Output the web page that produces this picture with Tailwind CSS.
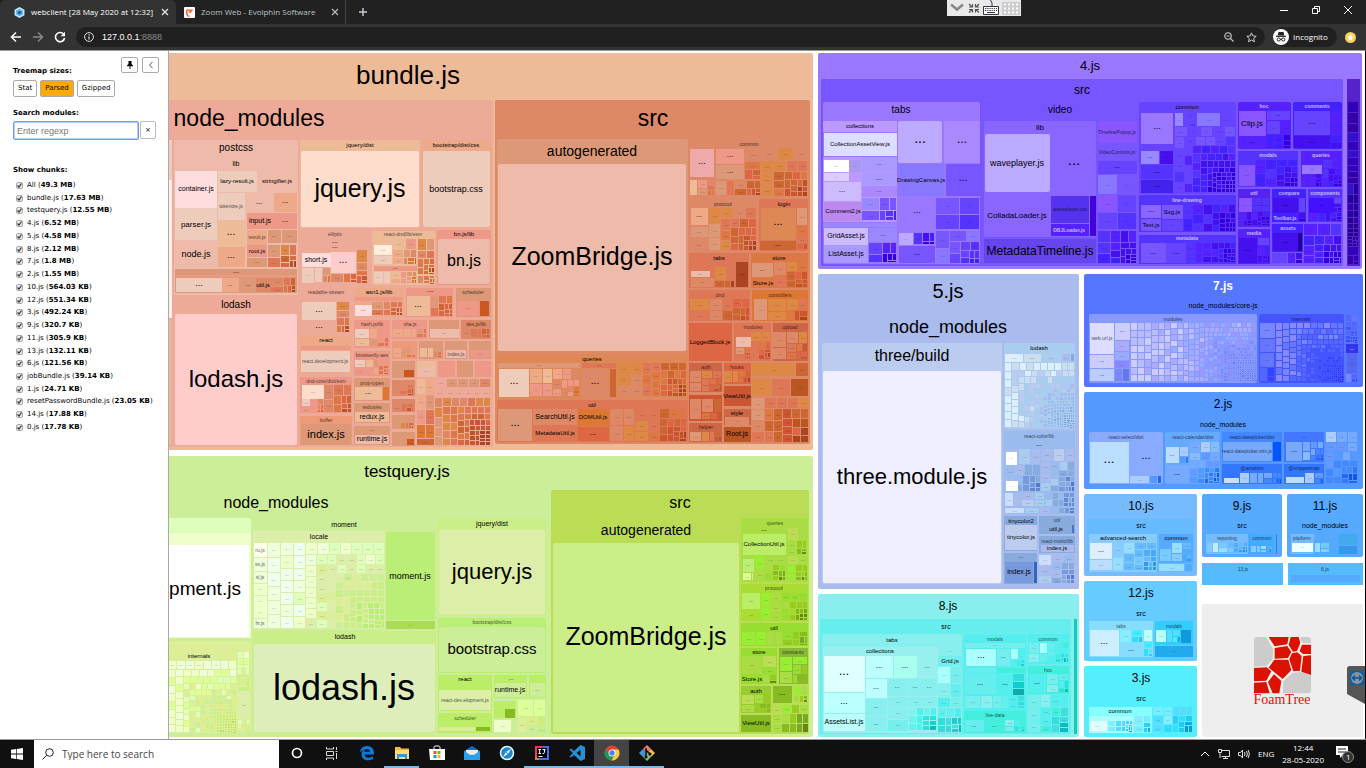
<!DOCTYPE html>
<html lang="en">
<head>
<meta charset="utf-8">
<title>webclient [28 May 2020 at 12:32]</title>
<script src="https://cdn.jsdelivr.net/npm/@tailwindcss/browser@4"></script>
</head>
<body class="flex h-screen flex-col overflow-hidden bg-white font-['Open_Sans','Noto_Sans',sans-serif] text-[8px] leading-3 text-white">
<header class="relative shrink-0 bg-[#333333]">
  <nav class="flex h-6 items-center bg-[#212121]">
    <div class="flex h-6 w-44 items-center rounded-t-md bg-[#333333] pl-3.5">
      <svg class="mr-1.5 size-[11px] shrink-0" viewBox="0 0 12 12"><path d="M6 0l5.4 3v6L6 12 .6 9V3z" fill="#c8e6f5"/><path d="M6 1.8l3.7 2.1v4.2L6 10.200 2.300 8.100V3.900z" fill="#5cb7e6"/><path d="M6 4l2 1v2.200L6 8.300 4 7.200V5z" fill="#1f64b5"/></svg>
      <a href="#" class="w-[126px] whitespace-nowrap">webclient [28 May 2020 at 12:32]</a>
      <button aria-label="Close tab" class="ml-1"><svg class="size-2" viewBox="0 0 8 8" stroke="#e8e8e8" stroke-width="1.200"><path d="M1 1l6 6M7 1L1 7"/></svg></button>
    </div>
    <div class="flex h-6 w-[170px] items-center border-r border-[#44444a] pl-2">
      <svg class="mr-1.5 size-[11px] shrink-0" viewBox="0 0 12 12"><rect width="12" height="12" rx="1" fill="#fff"/><path d="M3 8V3.500h6.500M6 6.500q0-1.500 2.500-1.500M3 6q0 3.500 3 4.500" fill="none" stroke="#ef6c33" stroke-width="1.600"/></svg>
      <a href="#" class="w-[130px] whitespace-nowrap text-[#b9c3c3]">Zoom Web - Evolphin Software</a>
      <button aria-label="Close tab"><svg class="size-2" viewBox="0 0 8 8" stroke="#bbb" stroke-width="1.200"><path d="M1 1l6 6M7 1L1 7"/></svg></button>
    </div>
    <button aria-label="New tab" class="ml-3"><svg class="size-2.5" viewBox="0 0 10 10" stroke="#ccd" stroke-width="1.400"><path d="M5 1v8M1 5h8"/></svg></button>
    <div class="ml-auto flex items-center gap-6 pr-3.5 pb-1">
      <button aria-label="Minimize"><svg class="size-2" viewBox="0 0 8 8" stroke="#fff"><path d="M0 4.500h8"/></svg></button>
      <button aria-label="Restore"><svg class="size-2" viewBox="0 0 8 8" stroke="#fff" fill="none"><path d="M.5 2.500h5v5h-5zM2.500 2V.5h5v5H6"/></svg></button>
      <button aria-label="Close window"><svg class="size-2" viewBox="0 0 8 8" stroke="#fff"><path d="M0 0l8 8M8 0L0 8"/></svg></button>
    </div>
  </nav>
  <div class="flex h-[26px] items-center px-2.5">
    <button aria-label="Back"><svg class="size-3" viewBox="0 0 12 12" fill="none" stroke="#fff" stroke-width="1.500"><path d="M11 6H1.500M6 1.500L1.500 6 6 10.500"/></svg></button>
    <button aria-label="Forward" class="ml-2.5"><svg class="size-3" viewBox="0 0 12 12" fill="none" stroke="#888" stroke-width="1.500"><path d="M1 6h9.500M6 1.500L10.500 6 6 10.500"/></svg></button>
    <button aria-label="Reload" class="mx-2.5"><svg class="size-3" viewBox="0 0 12 12"><path d="M10 3.700A4.600 4.600 0 1 0 10.600 7" fill="none" stroke="#fff" stroke-width="1.600"/><path d="M11 .8v4.400H6.600z" fill="#fff"/></svg></button>
    <div class="flex h-5 flex-1 items-center rounded-full bg-[#202020] px-2">
      <svg class="mr-2 size-2.5 shrink-0" viewBox="0 0 10 10"><circle cx="5" cy="5" r="4.400" fill="none" stroke="#ddd"/><path d="M5 4.500v3M5 2.300v1.200" stroke="#ddd" stroke-width="1.200"/></svg>
      <span class="flex-1 font-['Liberation_Sans',sans-serif] text-[9px]">127.0.0.1<span class="text-[#8c8c8c]">:8888</span></span>
      <button aria-label="Zoom"><svg class="size-2.5" viewBox="0 0 10 10" fill="none" stroke="#ccc" stroke-width="1.100"><circle cx="4" cy="4" r="3.200"/><path d="M6.300 6.300L9.500 9.500M2.500 4h3"/></svg></button>
      <button aria-label="Bookmark" class="ml-3"><svg class="size-[11px]" viewBox="0 0 12 12" fill="none" stroke="#ddd"><path d="M6 1l1.500 3.300 3.600.4-2.700 2.400.8 3.500L6 8.800l-3.200 1.800.8-3.500L.9 4.700l3.600-.4z"/></svg></button>
    </div>
    <div class="ml-2 flex h-5 w-16 items-center rounded-full bg-[#202020]">
      <svg class="mr-1 size-4 shrink-0" viewBox="0 0 16 16"><circle cx="8" cy="8" r="8" fill="#fff"/><path d="M5.500 3h5l.8 3.500H4.700z" fill="#222"/><path d="M3 7.300h10" stroke="#222" stroke-width="1.200"/><circle cx="5.700" cy="10.500" r="1.600" fill="none" stroke="#222"/><circle cx="10.300" cy="10.500" r="1.600" fill="none" stroke="#222"/><path d="M7 10.300h2" stroke="#222"/></svg>
      <span>Incognito</span>
    </div>
    <svg class="ml-2 size-[11px]" viewBox="0 0 12 12"><circle cx="6" cy="6" r="6" fill="#fbd05a"/><path d="M6 2.500L9.500 6H8v3H4V6H2.500z" fill="#fff"/></svg>
  </div>
  <svg class="absolute top-0 left-[947px] h-4 w-[74px]" viewBox="0 0 74 16"><path d="M0 0h74v16H0z" fill="#e9e9e9"/><path d="M4 4.500l6 5 6-5" fill="none" stroke="#888" stroke-width="2.500"/><g fill="none" stroke="#555" stroke-width="1.200"><path d="M22 4l3 3M25.500 4v3H22M32 4l-3 3M28.500 4v3H32M22 12.500l3-3M25.500 12.500v-3H22M32 12.500l-3-3M28.500 12.500v-3H32"/></g><path d="M36.500 6.500h15v8h-15z" fill="#fff" stroke="#334"/><path d="M38 8.500h12M38 10.500h12" stroke="#334" stroke-dasharray="1.200 1"/><path d="M40 12.500h8M43.500 0l1.500 3v3" fill="none" stroke="#334"/><path d="M55 2h18v13H55z" fill="#ccc"/><path d="M57 4.500h15M57 8.500h15M57 12.500h15" stroke="#fff" stroke-width="2" stroke-dasharray="2 2"/></svg>
</header>

<div class="flex min-h-0 flex-1 border-t border-r border-t-[#999] border-r-black">
  <aside class="w-[169px] shrink-0 border-r border-[#aaa] pl-[13px] font-['DejaVu_Sans',sans-serif] text-[7px] leading-[9px] text-black">
    <div class="flex gap-1 pt-[6px] pl-[108px]">
      <button aria-label="Pin" class="grid h-4 w-[17px] place-items-center rounded-[2px] border border-[#aaa]"><svg class="h-2 w-2" viewBox="0 0 8 8"><path d="M2.500 0h3v3l1.500 1.500v.7H1v-.7L2.500 3z"/><path d="M4 5v3" stroke="#000" stroke-width=".9"/></svg></button>
      <button aria-label="Hide sidebar" class="grid h-4 w-[17px] place-items-center rounded-[2px] border border-[#aaa]"><svg class="h-2 w-2" viewBox="0 0 8 8" fill="none" stroke="#555"><path d="M5.500.8L2.500 4l3 3.200"/></svg></button>
    </div>
    <h2 class="-mt-1.5 font-bold">Treemap sizes:</h2>
    <div class="mt-1 flex gap-[3px]">
      <button class="h-[17px] rounded-[2px] border border-[#aaa] px-1">Stat</button>
      <button class="h-[17px] rounded-[2px] border border-[#aaa] bg-[#ffaa00] px-1">Parsed</button>
      <button class="h-[17px] rounded-[2px] border border-[#aaa] px-1">Gzipped</button>
    </div>
    <label for="q" class="mt-3 block font-bold">Search modules:</label>
    <div class="mt-[3px] flex gap-px">
      <input id="q" placeholder="Enter regexp" class="h-[19px] w-[126px] rounded-[2px] border border-[#6b9cf0] px-[3px] font-['Liberation_Sans',sans-serif] text-[9px] ring-1 ring-[#b7cdf7] outline-none ring-inset placeholder:text-[#777]">
      <button aria-label="Clear" class="h-[18px] w-4 rounded-[2px] border border-[#bbb]">×</button>
    </div>
    <h2 class="mt-[26px] font-bold">Show chunks:</h2>
    <div id="chunks" class="mt-1.5 flex h-[251px] flex-col justify-between"></div>
  </aside>
  <main class="relative min-w-0 flex-1">
    <svg id="map" class="block h-full w-full font-['Liberation_Sans',Arial,sans-serif]" viewBox="169 51 1196 688" preserveAspectRatio="xMinYMin slice"></svg>
    <svg class="absolute top-[615px] right-0 h-[39px] w-[18px]" viewBox="0 0 18 39"><path d="M3 0h15v38L0 28V3q0-3 3-3z" fill="#555"/><path d="M3 5h14v14H3z" fill="#0b5fa5"/><circle cx="10" cy="12" r="6" fill="#8795a0"/><path d="M6 12h8M8 9.500L5.500 12 8 14.500M12 9.500l2.500 2.500-2.500 2.500" fill="none" stroke="#07518f" stroke-width="1.300"/></svg>
  </main>
</div>

<footer class="flex h-[29px] shrink-0 items-stretch border-t border-[#999] bg-[#101010]">
  <button aria-label="Start" class="grid w-[34px] place-items-center"><svg class="size-3" viewBox="0 0 12 12" fill="#fff"><path d="M0 1.700l5-.7v4.600H0zM5.700.9L12 0v5.600H5.700zM0 6.400h5V11l-5-.7zM5.700 6.400H12V12l-6.300-.9z"/></svg></button>
  <label class="flex w-[245px] items-center gap-2 bg-white px-2">
    <svg class="size-3" viewBox="0 0 12 12" fill="none" stroke="#222"><circle cx="7.500" cy="4.500" r="3.800"/><path d="M4.800 7.200L.5 11.500"/></svg>
    <input aria-label="Search" placeholder="Type here to search" class="min-w-0 flex-1 text-[10px] text-black outline-none placeholder:text-[#444]">
  </label>
  <div class="flex [&>button]:grid [&>button]:w-[35px] [&>button]:place-items-center [&>button]:border-b-2 [&_svg]:size-4">
    <button aria-label="Cortana" class="border-transparent"><svg viewBox="0 0 16 16"><circle cx="8" cy="8" r="4.500" fill="none" stroke="#fff" stroke-width="1.700"/></svg></button>
    <button aria-label="Task view" class="border-transparent"><svg viewBox="0 0 16 16" fill="none" stroke="#ddd"><path d="M2.500 2v2h7V2M2.500 6.500h7v4h-7zM2.500 15v-2h7v2M12.500 2v3M12.500 8v6M11.500 6.500h2"/></svg></button>
    <button aria-label="Edge" class="border-transparent"><svg viewBox="0 0 16 16"><path d="M1 7.500C1.500 3 4.500 1 8.200 1 12.500 1 15 4 15 8v1.500H5.500c.3 3.500 5 4 8.500 2V14c-5 2.800-11.500 1-11.500-4.500C2.500 7 4 5 6.500 4.200 5.500 5.200 5.400 6 5.400 6.800H11c0-4-6-4-10 .7z" fill="#0a7bdc"/></svg></button>
    <button aria-label="Explorer" class="border-[#76b9ed]"><svg viewBox="0 0 16 16"><path d="M1 2h5l1.500 1.500H15V14H1z" fill="#f5b83d"/><path d="M1 5h14v9H1z" fill="#fddb7a"/><path d="M3 9h10v5h-2v-2H5v2H3z" fill="#3a94d6"/></svg></button>
    <button aria-label="Store" class="border-transparent"><svg viewBox="0 0 16 16"><path d="M5 5V2.500Q5 1 6.500 1h3Q11 1 11 2.500V5" fill="none" stroke="#fff"/><path d="M0 4h16v11H1z" fill="#fff"/><path d="M4.500 6h3v3h-3z" fill="#f25022"/><path d="M8.500 6h3v3h-3z" fill="#7fba00"/><path d="M4.500 10h3v3h-3z" fill="#00a4ef"/><path d="M8.500 10h3v3h-3z" fill="#ffb900"/></svg></button>
    <button aria-label="Mail" class="border-transparent"><svg viewBox="0 0 16 16"><path d="M0 6l8-5 8 5v9H0z" fill="#0b6fc2"/><path d="M2 5h12v5H2z" fill="#eee"/><path d="M0 6l8 5 8-5v9H0z" fill="#28a0ea"/></svg></button>
    <button aria-label="Browser" class="border-transparent"><svg viewBox="0 0 16 16"><circle cx="8" cy="8" r="6.500" fill="#1d86cf" stroke="#dff" stroke-width="1.500"/><path d="M12 4L7 7l-3 5 5-3z" fill="#fff"/><path d="M7 7l2 2" stroke="#1d86cf"/></svg></button>
    <button aria-label="IntelliJ" class="border-[#76b9ed]"><svg viewBox="0 0 16 16"><path d="M1 1h8L1 15z" fill="#fe315d"/><path d="M9 1h6v14H1z" fill="#3f6ef0"/><path d="M1 10l5 5H1z" fill="#f0703d"/><path d="M3 3h10v10H3z" fill="#000"/><path d="M4.500 4.500h2.500M5.700 4.500v4M4.500 8.500h2.500M8.500 4.500h3M10.500 4.500v3q0 1-2 1M4.500 11.500h4" stroke="#fff" fill="none"/></svg></button>
    <button aria-label="VS Code" class="border-[#76b9ed]"><svg viewBox="0 0 16 16"><path d="M11.500 0L16 2v12l-4.500 2-6.500-6-3 2.500L.5 11.500 4 8 .5 4.500 2 3.500 5 6zM11.500 4.700L7.500 8l4 3.300z" fill="#2390d8" fill-rule="evenodd"/></svg></button>
    <button aria-label="Chrome" class="border-[#76b9ed] bg-[#444]"><svg viewBox="0 0 16 16"><circle cx="8" cy="8" r="7.500" fill="#db4437"/><path d="M1.500 4.200A7.500 7.500 0 0 0 7.500 15.500L11 9.500 5 9.700z" fill="#0f9d58"/><path d="M8 4.500h6.600A7.500 7.500 0 0 1 7.500 15.500L11 9.500z" fill="#ffcd40"/><circle cx="8" cy="8" r="3.500" fill="#fff"/><circle cx="8" cy="8" r="2.700" fill="#4285f4"/></svg></button>
    <button aria-label="Git" class="border-[#76b9ed]"><svg viewBox="0 0 16 16"><path d="M8 0l4 4-4 4-4-4z" fill="#f27d72"/><path d="M4 4l4 4-4 4-4-4z" fill="#4c8ee0"/><path d="M12 4l4 4-4 4-4-4z" fill="#f0c24c"/><path d="M8 8l4 4-4 4-4-4z" fill="#7ec36a"/><path d="M7 3v10M7 5l4 4" stroke="#111" stroke-width="1.500"/><circle cx="7" cy="12" r="1.500"/><circle cx="11" cy="9" r="1.500"/></svg></button>
  </div>
  <div class="ml-auto flex items-center gap-2 pr-3">
    <svg class="h-2 w-2.5" viewBox="0 0 10 8" fill="none" stroke="#fff"><path d="M1 6l4-4 4 4"/></svg>
    <svg class="size-3" viewBox="0 0 12 12" fill="none" stroke="#ddd"><path d="M3.500 2.500h8v6h-8M7.500 8.500v2M5 10.500h5M.5 1.500h3v3h-3zM2 4.500v5.500"/></svg>
    <svg class="h-3 w-3" viewBox="0 0 12 12" fill="none" stroke="#ddd"><path d="M.5 4.500h2l2-2.500v8l-2-2.500h-2zM6.500 4q1 2 0 4M8.500 3q1.800 3 0 6M10.200 2q2.300 4 0 8"/></svg>
    <span>ENG</span>
    <div class="text-center">12:44<br>28-05-2020</div>
    <svg class="ml-1 h-5 w-[18px]" viewBox="0 0 18 20"><path d="M0 2h12v9H7l-3 3v-3H0z" fill="#fff"/><path d="M2 5h8M2 8h8" stroke="#222"/><circle cx="12" cy="13" r="5.500" fill="#333" stroke="#888"/><text x="10" y="16" font-size="8" fill="#fff">1</text></svg>
  </div>
</footer>

<script>
const chunks = [['All','49.3 MB'],['bundle.js','17.63 MB'],['testquery.js','12.55 MB'],['4.js','6.52 MB'],['5.js','4.58 MB'],['8.js','2.12 MB'],['7.js','1.8 MB'],['2.js','1.55 MB'],['10.js','564.03 KB'],['12.js','551.34 KB'],['3.js','492.24 KB'],['9.js','320.7 KB'],['11.js','305.9 KB'],['13.js','132.11 KB'],['6.js','121.56 KB'],['jobBundle.js','39.14 KB'],['1.js','24.71 KB'],['resetPasswordBundle.js','23.05 KB'],['14.js','17.88 KB'],['0.js','17.78 KB']];
document.getElementById('chunks').innerHTML = chunks.map(([n, s]) =>
  `<label class="flex items-center gap-1 pl-[3px] whitespace-nowrap"><span class="grid"><input type="checkbox" checked class="col-start-1 row-start-1 m-0 size-[7px] appearance-none rounded-[2px] border border-[#aaa] bg-[#e8e8e8]"><svg class="pointer-events-none col-start-1 row-start-1 size-[7px]" viewBox="0 0 7 7" fill="none" stroke="#333" stroke-width="1.200"><path d="M1.500 3.500l1.500 1.500 2.500-3.500"/></svg></span><span>${n} (<b>${s}</b>)</span></label>`).join('');

/* Treemap rows: "x1 y1 x2 y2 colour [size label]" is a box,
   "t|w cx cy size label" is dark|white text,
   "f x1 y1 x2 y2 palette count [falloff]" is a squarified block of small modules. */
const palettes = {
  o: 'fdc ecb eb9 ea8 e98 d97 d86 e98 d75 d73 c63'.split(' '),
  r: 'ea9 d97 d86 d84 d75 d74 c63 d64 c53 b52 a42'.split(' '),
  g: 'efd efc df9 dfb de9 ce9 de8 ce8 ce7 be7 bd5'.split(' '),
  l: 'efe efd efc dfb dea de9 ce9 ce8 ce8 be7 be7'.split(' '),
  G: 'ce7 bd5 ad4 9e3 ad4 9d3 9c2 8b2 8b2 7a2 681'.split(' '),
  v: 'a8f 98f 87f 75f 85f 64f 64f 53f 53f 42e'.split(' '),
  V: '75f 64f 53f 52f 42f 41e 41e 30d 30d 30c'.split(' '),
  D: '42d 31c 30b 30a 209 208'.split(' '),
  b: 'eef cdf bce abe ace 9be 8ad 8ad 79d 68c 57c'.split(' '),
  m: 'def cde bce ace ace abe 9be 9be 8ad 8ad 79d'.split(' '),
  c: 'cff aff 8ee 7ee 6ee 5ee 4ed 3dd 4dd 2cc 1bb'.split(' '),
  u: 'ccf bbf aaf 9af 99f 89f 88f 78f 78f 67f 67e'.split(' '),
  U: '88f 78f 67f 56f 56f 45f 45f 34f 34f 33e 22d'.split(' '),
  k: 'def acf 8bf 7af 69f 59f 48f 48f 37f 26f 15e'.split(' '),
  s: 'dff bef 9df 8cf 7cf 6bf 5af 5bf 4af 39e 28d'.split(' '),
  t: 'dff bff 8ef 7ef 5df 4ef 3df 3cf 2ce 1ae 19c'.split(' ')
};
const out = [];
const box = (a, b, c, d, col) => out.push(`<rect x="${a}" y="${b}" width="${Math.max(1, c - a)}" height="${Math.max(1, d - b)}" rx="${Math.min(c - a, d - b) > 40 ? 2 : 0}" fill="#${col}"/>`);
const label = (x, y, s, str, white) => {
  const faint = s < 6 ? ' opacity=".65"' : '';
  const drop = str[0] === '.' ? 1 : Math.round(s * .33);
  out.push(`<text x="${x}" y="${y + drop}" font-size="${s}" text-anchor="middle"${faint}${white ? ' fill="#fff" font-weight="bold"' : ''}>${str}</text>`);
};
let seed = 7;
const rnd = () => (seed = (seed * 16807) % 2147483647) / 2147483647;
function fill(x1, y1, x2, y2, pal, n, k) {
  const p = palettes[pal], w = [], start = n < 40 ? 2 : 0;
  for (let i = 0; i < n; i++) w.push(Math.exp(-k * i / n));
  let x = x1, y = y1, W = x2 - x1, H = y2 - y1, sum = w.reduce((a, b) => a + b, 0), i = 0;
  while (i < n && W > 1 && H > 1) {
    const side = Math.min(W, H), area = W * H / sum;
    let j = i, s = 0, best = 1e9;
    while (j < n) {
      const s2 = s + w[j], t = s2 * area / side, first = w[i] * area / t, last = w[j] * area / t;
      const worst = Math.max(first / t, t / first, t / last, last / t);
      if (worst > best) break;
      best = worst; s = s2; j++;
    }
    const t = s * area / side; let q = 0;
    for (let m = i; m < j; m++) {
      const len = w[m] * area / t;
      const r = W < H ? [x + q, y, x + q + len, y + t] : [x, y + q, x + t, y + q + len];
      const [a, b, c, d] = r.map(Math.round);
      const pos = start + m / n * (p.length - 1 - start) + (rnd() - .5) * 3;
      box(a, b, c - 1, d - 1, p[Math.max(0, Math.min(p.length - 1, Math.round(pos)))]);
      if (c - a > 8 && d - b > 5) label((a + c) >> 1, (b + d) >> 1, 4, '....');
      q += len;
    }
    if (W < H) { y += t; H -= t; } else { x += t; W -= t; }
    sum -= s; i = j;
  }
}
function panel(ox, oy, unit, rows, unitY = unit) {
  const X = v => Math.round(ox + v / unit), Y = v => Math.round(oy + v / unitY);
  rows.trim().split('\n').forEach(line => {
    const p = line.trim().split(' ');
    if (p[0] === 't' || p[0] === 'w') label(X(+p[1]), Y(+p[2]), +p[3], p.slice(4).join(' '), p[0] === 'w');
    else if (p[0] === 'f') fill(X(+p[1]), Y(+p[2]), X(+p[3]), Y(+p[4]), p[5], +p[6], +(p[7] || 2.5));
    else {
      const [a, b, c, d] = [X(+p[0]), Y(+p[1]), X(+p[2]), Y(+p[3])];
      box(a, b, c, d, p[4]);
      if (p[5]) label((a + c) >> 1, (b + d) >> 1, +p[5], p.slice(6).join(' '));
    }
  });
}
/* chunk backgrounds */
panel(0, 0, 1, `
160 53 813 450 eb9
160 100 493 447 ea9
495 100 810 444 d86
t 408 75 26 bundle.js
t 249 118 23 node_modules
t 653 118 23 src
160 140 172 180 ecb
160 180 172 318 fee
160 320 171 444 eb9
160 456 813 737 ce9
t 407 471 17 testquery.js
t 276 503 16 node_modules
551 490 809 734 bd5
t 680 503 16 src
`);
/* bundle.js / node_modules */
panel(168, 130, 3, `
18 30 391 494 eba
t 204 54 10 postcss
t 204 102 7 lib
21 123 147 233 fdd 7 container.js
149 123 267 185 ecb 6 lazy-result.js
t 328 154 6 stringifier.js
149 189 231 269 ecb 5 tokenize.js
t 274 218 8 ...
318 189 386 247 ea8 8 ...
21 235 148 330 ecb 8 parser.js
t 84 372 9 node.js
149 272 232 350 eb9 10 ...
149 352 232 411 ea8 9 ...
236 249 314 297 e98 7 input.js
316 249 386 297 e98 8 ...
236 300 297 344 ea8 5 result.js
299 300 340 340 d97 5 ...
342 300 386 340 d97 5 ...
236 346 297 380 e98 6 root.js
236 383 297 411 d97 5 ...
f 299 344 388 413 r 9
21 418 386 490 d97
t 203 425 7 ...
21 434 386 441 e98
23 443 162 486 ecb 9 ...
163 443 213 486 ea8 6 ...
215 443 263 486 d97 6 ...
264 443 308 486 d86 6 util.js
f 310 443 385 488 r 8
t 203 525 10 lodash
21 552 387 945 fcc 24 lodash.js
397 30 757 294 eb9
t 575 44 6 jquery/dist
399 63 753 291 fdc 25 jquery.js
762 30 968 294 ea8
t 865 44 6 bootstrap/dist/css
765 63 965 291 ecb 9 bootstrap.css
t 500 312 5 elliptic
t 500 335 7 ...
t 500 350 7 ...
402 369 488 411 fdd 7 short.js
490 366 565 429 fcc 10 ...
402 413 439 459 ecb 4 ...
f 441 413 490 460 o 4
f 567 360 600 462 r 6
f 490 433 566 460 r 4
613 303 802 465 eb9
t 706 312 5 react-dnd/lib/esm
617 345 673 375 fed 5 ...
617 377 673 403 ecb 5 ...
f 675 328 748 405 o 10
f 750 328 800 435 r 14
617 408 747 423 e98 6 ...
617 426 645 460 ecb 4 ...
f 647 426 748 461 o 12
f 751 438 800 461 r 7
807 300 968 465 e98
t 887 312 6 bn.js/lib
809 327 966 462 eba 16 bn.js
t 473 485 5 readable-stream
402 515 504 569 ecb 9 ...
t 454 590 9 ...
f 507 515 545 608 r 8
560 473 707 562 ea8
t 632 485 6 asn1.js/lib
562 500 704 512 e98
562 524 611 558 fdd 6 ...
f 613 515 705 559 r 12
714 473 856 562 e98
t 785 484 8 ...
717 498 786 559 eb9 9 ...
f 788 498 855 560 r 12
864 473 968 562 d97
t 915 485 5 scheduler
866 514 934 559 e98 5 ...
936 514 963 559 c52
397 618 552 728 ea8
t 474 630 6 react
399 648 548 660 e98
399 663 547 727 ecb 5 react.development.js
397 740 552 850 e98
t 474 752 5 dnd-core/dist/esm
401 766 467 806 fdc 5 ...
f 469 766 551 848 r 12
f 401 808 468 848 o 10
397 858 552 945 e97
t 474 869 5 buffer
399 883 549 944 d97 11 index.js
558 570 667 654 e98
t 612 583 5 hash.js/lib
f 562 598 664 652 o 10
558 663 667 738 e98
t 612 675 5 browserify-aes
f 562 690 664 736 o 14
558 744 667 812 d97
t 612 758 5 prop-types
562 771 643 809 eb9 8 ...
645 771 664 809 d73
558 819 667 880 d97
t 612 831 5 redux/es
562 846 662 876 eb9 7 redux.js
558 888 667 945 d97
t 612 899 5 ...
562 914 662 943 eba 7 runtime.js
673 570 778 626 e98
t 725 583 5 sha.js
f 675 597 776 624 o 7
783 570 874 626 d97
785 597 873 623 eba 5 ...
880 570 968 626 d86
t 925 583 5 des.js/lib
f 882 597 967 624 r 7
673 632 746 686 e97
f 675 655 745 684 o 6
753 632 824 686 d97
f 755 655 823 684 o 6
831 632 896 686 d97
833 660 895 683 eba 5 index.js
903 632 968 686 d97
905 660 966 683 e98 4 ....
673 692 740 744 d97
707 720 738 742 c52
673 750 740 798 d86
f 675 766 739 796 r 7
673 806 740 846 d86
f 675 822 739 845 r 5
673 855 740 898 d97
f 675 878 739 897 r 6
673 906 740 948 d97
717 926 738 946 c52
747 692 804 742 eb9
749 710 802 738 eba 4 ....
811 692 862 742 e98
868 692 914 742 d97
920 692 968 742 e98
f 747 747 800 948 o 9 .2
f 802 747 970 948 r 72 1.8
`);
/* bundle.js / src */
panel(490, 130, 3, `
21 28 593 664 d97
t 307 63 14 autogenerated
24 102 588 662 eba 25 ZoomBridge.js
t 776 41 5 common
600 57 672 140 eaa 9 ...
678 57 762 101 e98 8 ...
678 105 762 148 d97 8 ...
f 764 57 812 150 r 5
f 600 150 675 198 o 7
f 678 152 812 198 r 10
f 814 54 954 200 r 26
t 699 221 5 protocol
602 234 655 284 ea8 7 ...
f 657 234 802 362 r 28
602 290 655 322 d97 5 ...
t 628 345 5 ...
808 208 955 363 d75
t 881 221 6 login
813 235 919 329 d85 11 ...
811 332 919 359 c63 7 ...
f 922 235 954 361 r 5
598 370 778 475 d75
t 688 383 6 tabs
602 422 660 440 eba 5 ...
602 444 672 470 d86 5 ...
f 674 412 736 473 r 5
738 396 774 472 a42 6 ...
783 370 955 475 d74
t 868 383 6 store
786 398 850 442 d97 6 ...
t 819 458 6 Store.js
f 852 396 954 474 r 12
598 480 781 573 d75
t 690 494 5 dnd
f 601 507 781 572 r 14
787 480 955 573 d73
t 871 494 5 controllers
f 791 507 954 572 r 9
598 578 727 692 d64 6 LoggedBlock.js
732 578 843 692 d75
t 788 592 5 modules
738 622 782 652 eba 4 ...
f 784 605 842 690 r 12
f 738 654 783 690 r 6
848 578 955 692 c64
t 901 592 5 upload
f 850 605 954 691 r 11
21 672 593 803 d85
t 307 686 6 queries
23 699 271 714 d97 5 ...
26 717 117 800 ecb 10 ...
f 120 717 271 802 o 18
275 699 379 714 d75 5 ...
277 717 357 800 d86 10 ...
360 717 379 800 c63
f 385 700 592 802 r 38
21 810 593 936 d75
t 307 824 6 util
25 838 126 932 d97 11 ...
129 838 261 885 d86 7 SearchUtil.js
129 888 261 932 d75 6 MetadataUtil.js
264 838 357 887 d73 6 DOMUtil.js
264 890 357 932 d64 8 ...
f 360 838 592 935 r 28
598 698 695 787 c64
t 647 712 5 auth
f 601 724 695 785 r 12
598 794 695 873 c53
f 601 806 695 871 r 6
598 880 695 936 c64
t 647 890 5 helper
f 601 905 695 936 r 6
701 698 783 761 d64
t 742 711 5 hooks
f 703 724 782 760 r 7
701 768 783 828 c53 6 ViewUtil.js
701 836 783 886 c64
t 742 848 6 style
705 862 778 884 d86 4 ...
701 892 783 936 b52 7 Root.js
f 787 698 957 742 r 2
f 787 748 957 800 r 3 .2
f 787 804 957 938 r 26 1
`);
/* testquery.js / node_modules */
panel(168, 450, 3, `
0 205 250 565 dfb
0 248 248 565 efc
-30 285 244 562 fff
t 111 418 19 pment.js
0 573 250 850 de9
t 92 619 6 internals
f 0 633 208 848 g 190 2.8
f 211 605 246 708 g 24
211 710 246 722 ce8
211 724 246 806 dea 5 ...
f 211 810 246 848 g 16
t 529 224 7 moment
256 243 652 538 dea
t 453 261 7 locale
259 279 298 322 ffe 5 ru.js
259 325 298 364 efd 5 ss.js
259 366 298 400 efd 5 sl.js
259 402 298 436 efc 4 ....
259 438 298 470 efc 4 ....
259 472 298 504 efc 4 ....
259 506 298 535 efd 5 hr.js
f 301 278 651 536 l 120 2
654 246 801 510 be7 9 moment.js
654 512 801 537 ad5 4 ...
256 544 804 848 ce8
t 530 561 7 lodash
258 582 801 845 deb 36 lodash.js
`);
panel(490, 450, 3, `
-157 205 168 498 ce8
t 7 221 7 jquery/dist
-154 241 165 492 dea 22 jquery.js
-157 503 168 668 be7
t 7 515 5 bootstrap/dist/css
-154 530 165 667 ce9 15 bootstrap.css
-157 676 5 783 be6
t -75 687 6 react
-154 720 3 779 dea 5 react-dev.elopment.js
-157 790 5 848 be6
t -75 803 5 scheduler
-152 830 -45 844 de9
-42 830 0 844 8b2
12 676 111 743 be6
t 62 688 6 ...
16 700 108 740 ce9 7 runtime.js
117 676 168 743 be6
119 700 165 740 ce9 5 ...
12 752 78 805 be6
46 777 75 803 8b2
f 12 809 80 848 g 2
f 83 750 168 848 g 8
t 467 240 14 autogenerated
189 279 746 846 ce8 25 ZoomBridge.js
754 205 955 395 ad4
t 854 218 5 queries
t 823 241 7 ...
758 251 888 316 be6 6 CollectionUtil.js
f 895 235 951 315 G 9
758 327 792 366 be7 5 ...
f 794 319 889 393 G 14
f 894 319 953 394 G 12
f 758 368 792 393 g 2
754 402 955 514 ad3
t 853 415 5 protocol
757 430 810 476 be6 5 ...
f 812 430 953 512 G 24
t 783 496 5 ...
754 520 955 588 9d3
t 853 533 6 util
f 756 546 953 587 G 12
754 595 860 702 9d3
t 808 607 6 store
757 618 816 671 ad4 5 ...
t 787 686 6 Store.js
f 819 618 860 701 G 5
867 595 955 702 8b3
t 910 607 5 constants
f 869 620 953 701 G 9
754 709 843 789 9c3
t 798 722 6 auth
f 756 736 842 788 G 9
754 795 843 847 8b2 6 ViewUtil.js
850 709 906 760 8b2 8 ...
f 911 709 955 760 G 6
f 850 766 957 850 G 14 .5
`);
/* 4.js */
panel(815, 50, 2.846, `
9 10 1558 656 97f
t 782 47 13 4.js
16 88 1504 648 75f
t 760 120 12 src
1513 88 1551 648 52c
f 1516 155 1549 590 D 34
f 1516 592 1549 645 D 4
22 156 471 641 97f
t 245 181 10 tabs
24 213 233 246 b9f
t 129 229 6 collections
25 249 232 318 ddf 6 CollectionAssetView.js
24 320 233 515 b9f
25 331 97 366 fff 5 ...
25 368 97 392 dcf 4 ...
26 396 132 454 cbf 8 ...
26 457 133 513 b8e 6 Comment2.js
98 331 131 366 a9e 4 ...
135 322 232 367 a9f 6 ...
135 369 232 406 a9f 7 ...
135 408 232 441 a8f 6 ...
f 135 444 233 514 v 8
24 518 233 532 98f
25 535 151 584 cbf 7 GridAsset.js
25 586 151 638 a9f 7 ListAsset.js
153 535 232 577 98f 6 ...
f 153 579 233 640 V 8
237 213 362 339 baf 14 ...
366 213 470 340 a8f 12 ...
237 343 368 438 87f 6 DrawingCanvas.js
372 343 470 438 75f 10 ...
t 289 485 9 ...
f 344 444 471 541 v 4 .3
238 548 280 584 baf 4 ...
f 282 548 342 585 V 5
238 588 342 638 75f 8 ...
f 344 543 471 641 v 14
t 698 181 10 video
481 213 801 562 86f
t 641 230 8 lib
483 253 669 426 baf 9 waveplayer.js
t 736 343 15 ...
t 576 494 8 ColladaLoader.js
672 438 780 520 53e 5 waveplayer.css
672 522 780 559 52f
w 724 540 5 OBJLoader.js
782 438 801 559 40d
481 566 801 640 64e 12 MetadataTimeline.js
805 213 915 280 85f 5 TimelinePopup.js
805 282 915 331 75f 5 VideoControls.js
805 333 915 371 64f 7 ...
f 805 374 917 541 v 6 .2
f 805 542 917 641 V 20
922 156 1198 431 64f
t 1060 172 6 common
928 189 1020 282 97f 9 ...
928 303 979 341 98f 6 ...
981 303 1018 341 41e 5 ...
928 346 1020 387 53f 8 ...
928 390 1020 428 42e 8 ...
f 1024 189 1085 231 v 5
f 1087 189 1197 231 v 3
f 1024 232 1197 430 V 80
922 436 1198 546 53f
w 1060 450 5 line-drawing
928 465 986 504 86f 7 ...
928 507 986 544 75f 6 Text.js
988 465 1046 507 75f 6 Svg.js
988 509 1046 544 64f 5 ...
f 1049 465 1197 545 V 28
922 554 1198 641 53f
w 1060 565 5 metadata
928 580 998 638 75f 8 ...
1000 580 1056 638 64f 8 ...
f 1058 580 1197 640 V 28
1203 156 1355 297 52f
w 1279 168 5 hoc
1206 183 1283 258 85f 8 Clip.js
1206 261 1283 294 52f 7 ...
1286 183 1353 211 64f 6 ...
f 1286 212 1354 296 V 8
1360 156 1500 297 42f
w 1430 168 5 comments
1363 183 1465 255 64f 9 ...
1363 259 1465 295 41e 7 ...
f 1468 183 1500 296 V 5
1203 303 1376 411 53f
w 1290 315 5 modals
1207 345 1252 408 85f 5 ...
f 1254 330 1375 410 V 20
1383 303 1500 411 52f
w 1441 315 5 queries
1387 345 1443 371 97f 5 ...
f 1445 330 1500 410 V 14
f 1387 373 1443 410 V 7
1203 418 1295 530 52e
w 1250 430 5 util
1207 445 1243 485 85f 4 ...
f 1245 445 1294 529 V 16
f 1207 487 1243 529 V 6
1300 418 1398 516 42f
w 1350 430 5 compare
1303 443 1375 488 41e 7 ...
w 1339 503 5 Toolbar.js
f 1377 443 1398 515 V 3
1404 418 1500 516 53f
w 1452 430 5 components
1407 443 1476 488 41f 6 ...
f 1407 490 1499 515 V 8
f 1478 443 1499 489 V 5
1203 538 1295 641 52f
w 1249 550 5 media
1206 563 1258 640 41e 7 ...
f 1260 563 1295 640 V 7
1300 523 1390 605 42f
w 1345 535 5 assets
1303 549 1374 603 41e 7 ...
1376 549 1386 603 209
f 1393 523 1501 641 V 24
f 1300 608 1390 641 V 4
`, 3);
/* 5.js and 8.js */
panel(815, 270, 3, `
9 12 792 957 abe
t 400 64 20 5.js
t 400 170 18 node_modules
21 220 561 943 bce
t 291 259 16 three/build
25 304 558 940 eef 22 three.module.js
566 220 779 476 ace
t 673 235 6 lodash
569 252 624 276 def 5 ...
626 252 677 276 cde 5 ...
f 679 252 779 277 m 3
f 569 279 779 475 m 230 3
566 484 779 732 9be
t 673 497 5 react-color/lib
t 673 524 7 ...
f 569 538 677 665 b 18
573 546 606 584 fff 4 ...
f 679 538 779 665 b 24
573 634 610 663 fff 4 ...
f 569 668 779 712 b 20
f 569 714 779 732 b 8
566 738 667 843 8ad
t 617 752 6 tinycolor2
569 766 665 839 bce 6 tinycolor.js
672 738 779 793 8ad
t 727 751 5 util
t 723 777 6 util.js
772 766 777 790 47b
672 798 779 849 8ad
t 727 812 5 react-motio/lib
678 825 776 847 abe 6 index.js
566 850 667 943 8ad
t 617 862 6 ...
570 877 655 940 79d 7 index.js
657 877 665 940 36b
f 672 855 779 943 b 18
9 972 792 1401 8ee
t 400 1008 12 8.js
16 1047 768 1393 6ee
t 392 1070 7 src
777 1047 785 1393 1cb
22 1093 441 1388 8ee
t 231 1111 6 tabs
24 1130 368 1388 9ee
t 195 1143 6 collections
27 1158 149 1265 dff 12 ...
27 1268 151 1328 bff 9 ...
27 1331 151 1382 bff 7 AssetsList.js
152 1158 234 1224 bff 8 ...
236 1158 306 1224 afe 8 ...
308 1158 366 1224 9ee 6 ...
154 1228 216 1283 bff 7 ...
154 1286 217 1338 8ee 6 ...
154 1340 217 1383 8ee 6 ...
220 1228 276 1278 8ee 6 ...
278 1228 320 1278 8ee 6 ...
322 1228 366 1278 8ee 6 ...
220 1280 280 1312 8ee 5 ...
282 1280 326 1312 8ee 5 ...
328 1280 366 1312 8ee 5 ...
220 1315 280 1348 8ee 5 ...
220 1350 280 1384 7ee 5 ...
f 282 1315 367 1384 c 14 .8
370 1130 440 1158 8ee 4 ...
370 1158 440 1188 7ee 6 Grid.js
f 370 1190 440 1388 c 18
448 1095 632 1388 5ee
t 540 1106 5 modals
450 1120 630 1134 7ee 4 ...
453 1137 543 1189 aff 9 ...
546 1137 585 1189 7ee 6 ...
f 588 1137 631 1190 c 6
450 1195 544 1210 6ee
450 1212 544 1273 6ee 8 ...
546 1195 631 1210 4ed
550 1212 592 1273 5ee 7 ...
594 1212 628 1234 3dd
594 1235 628 1255 1cc
594 1256 628 1274 1aa
f 450 1277 631 1316 c 9
448 1323 632 1388 4ed
t 540 1336 5 live-data
450 1350 508 1385 6ee 6 ...
510 1350 568 1385 4ed 6 ...
f 570 1350 631 1387 c 8
638 1093 762 1181 5ee
t 700 1107 5 common
f 642 1119 761 1180 c 18
638 1187 762 1271 4ed
t 700 1199 5 hoc
642 1213 694 1268 5ee 7 ...
f 696 1213 761 1270 c 7
f 638 1275 762 1390 c 16 1.5
`);
/* the smaller chunks */
panel(1080, 270, 3, `
12 12 848 351 57f
w 430 47 12 7.js
t 430 109 7 node_modules/core-js
26 132 532 338 89f
t 279 146 5 modules
30 160 102 252 ddf 5 web.url.js
30 256 102 294 ccf 6 ...
30 297 102 333 bcf 6 ...
105 160 150 210 ccf 6 ...
f 105 213 151 335 u 5 .8
f 153 160 532 337 u 420 3
537 132 792 338 45f
t 664 146 5 internals
540 160 584 204 78f 6 ...
540 206 584 246 67f 5 ...
f 540 248 585 336 U 4
f 587 160 791 337 U 230 3
f 797 135 834 218 U 20
797 222 834 248 33e
w 815 238 5 ...
800 250 832 308 56e 5 ...
f 797 312 834 338 U 4
12 366 848 656 59f
t 430 402 12 2.js
t 430 464 7 node_modules
26 487 249 642 8af
t 137 500 5 react-select/dist
30 516 147 638 bdf 13 ...
150 516 246 615 8af 11 ...
f 150 618 247 641 k 3
254 487 421 642 6af
t 338 500 5 react-calendar/dist
257 530 297 580 bdf 6 ...
257 584 326 639 7af 8 ...
f 299 530 327 582 k 3
f 330 515 421 641 k 28
427 487 606 575 48f
t 516 500 5 react-datepicker/dist
430 515 577 572 7af 5 react-datepicker.min.js
579 515 603 572 05f
427 582 606 642 37f
t 517 594 5 @amotion
432 624 477 638 cdf
f 480 608 606 641 k 10
612 487 732 575 47f
t 671 500 5 ...
617 515 666 572 7af 7 ...
f 668 515 731 574 k 12
612 582 732 642 37f
t 672 594 5 @snippetmap
617 622 672 638 bdf
f 674 608 731 641 k 4
f 737 487 834 643 k 26 1.5
12 672 351 917 7bf
t 183 708 12 10.js
22 747 342 907 6bf
t 182 769 7 src
26 792 232 907 8cf
t 128 805 6 advanced-search
30 820 95 866 def 7 ...
30 870 95 900 bdf 5 ...
f 98 820 231 904 s 20
236 792 338 878 5af
t 287 805 6 common
240 838 273 872 7cf 4 ...
f 275 820 337 877 s 7
f 236 882 338 905 s 2
366 672 605 862 5af
t 485 708 12 9.js
t 485 769 7 src
378 792 505 852 7bf
t 442 805 5 reporting
f 382 820 503 850 s 16
508 792 582 852 4af
t 545 805 5 common
f 512 828 580 850 s 9
587 792 591 852 28d
621 672 848 862 5af
t 735 708 12 11.js
t 734 769 7 node_modules
634 792 702 852 7bf
t 667 805 5 platform
637 819 699 846 eff 4 ...
f 705 820 770 850 s 8
776 792 831 825 4ae
776 829 831 852 39e
366 878 610 945 5bf
t 488 897 5 13.js
625 878 848 945 5bf
t 736 897 5 6.js
633 915 840 937 5af
12 933 351 1173 6cf
t 183 968 12 12.js
t 182 1031 7 src
26 1053 219 1160 8df
t 122 1067 5 tabs
30 1080 116 1157 cef 9 ...
f 119 1080 189 1118 t 4
t 154 1139 7 ...
f 192 1080 218 1160 t 5
225 1053 338 1125 3cf
t 282 1067 5 modals
f 228 1080 302 1120 t 5
304 1080 334 1120 19d
225 1129 338 1160 2ae 4 ...
12 1188 351 1401 5ef
t 182 1224 12 3.js
t 182 1287 7 src
26 1310 215 1390 8ff
t 121 1324 6 common
28 1338 160 1388 aff
30 1353 82 1383 dff 4 ...
f 84 1353 160 1386 t 14
f 163 1338 214 1388 t 6
f 220 1310 338 1390 t 18 1.5
366 1002 848 1401 eee
`);
/* FoamTree badge */
out.push(`<g transform="translate(1166 590) scale(.3333)"><rect x="264" y="141" width="171" height="169" rx="10" fill="#f4f0ee"/>
<path fill="#ccc" d="M264 150q0-9 9-9h27l22 37-2 30-18 20-38 2zM405 141h21q9 0 9 9v9h-24l-8-8zM352 272l28-24 23-2 32 10v45q0 9-9 9h-76z"/>
<path fill="#d10" d="M308 141h60l-4 22-38 6zM374 141h24l5 18-10 24-12 2-13-20zM326 174l38-6 12 18-10 18-40 2zM408 164h27v28h-23l-11-8zM378 190l16-3 13 11-5 44-20 2-12-36zM412 198l23-2v59l-29-10zM325 209l42 0 9 32-26 26-42-34zM264 234l38-2 14 12-15 28-37 2zM324 253l22 20-6 37h-20l-14-34zM264 278l37-2 10 34h-47z"/></g>
<text x="1282" y="704" font-size="14" text-anchor="middle" fill="#d10" class="font-['Liberation_Serif',serif]">FoamTree</text>`);
document.getElementById('map').innerHTML = out.join('');
</script>
</body>
</html>
